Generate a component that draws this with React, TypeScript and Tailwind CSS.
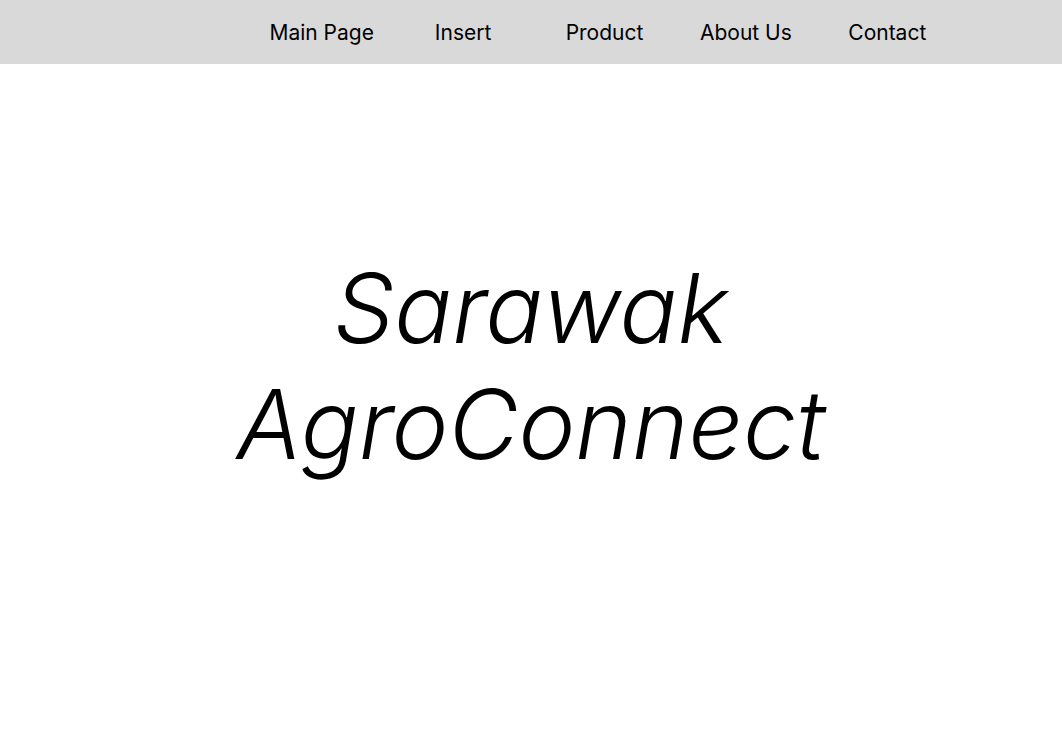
import React from "react";

export default function App() {
  const items = ["Main Page", "Insert", "Product", "About Us", "Contact"];
  return (
    <div className="min-h-[755px] bg-white text-black" style={{ fontFamily: "Inter, 'Noto Sans', sans-serif" }}>
      <nav className="h-16 bg-[#d9d9d9] flex items-center justify-end pr-[104px] pt-[2px]">
        <ul className="grid grid-cols-5 w-[707px]">
          {items.map((t) => (
            <li key={t} className="text-center text-[21px] leading-6 text-black">
              {t}
            </li>
          ))}
        </ul>
      </nav>
      <main className="pt-[186px] flex justify-center">
        <h1 className="text-center italic font-light text-[96px] leading-[116px]">
          Sarawak
          <br />
          AgroConnect
        </h1>
      </main>
    </div>
  );
}
